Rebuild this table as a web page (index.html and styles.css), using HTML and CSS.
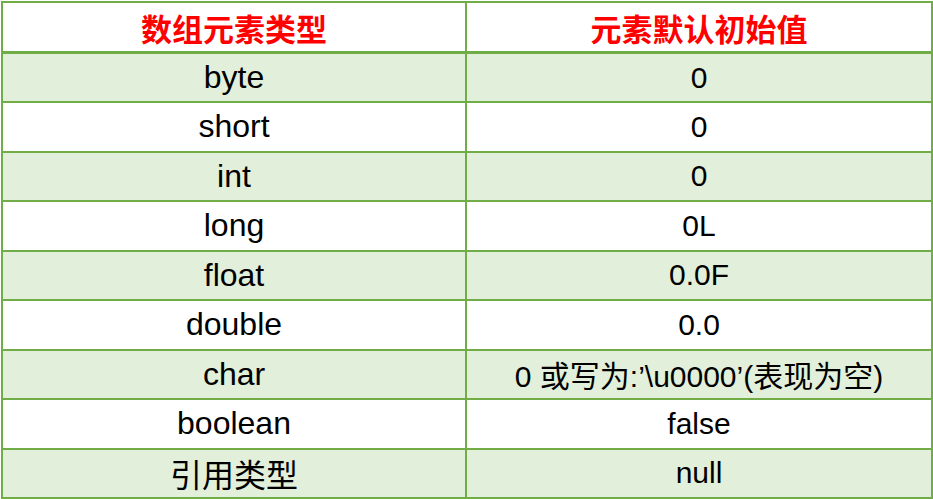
FILE: index.html
```html
<!DOCTYPE html>
<html lang="zh-CN">
<head>
<meta charset="utf-8">
<title>数组元素默认初始值</title>
<link rel="stylesheet" href="styles.css">
</head>
<body>
<table class="tbl">
  <thead>
    <tr class="head">
      <th class="c1">数组元素类型</th>
      <th class="c2">元素默认初始值</th>
    </tr>
  </thead>
  <tbody>
    <tr class="g"><td class="c1">byte</td><td class="c2">0</td></tr>
    <tr class="w"><td class="c1">short</td><td class="c2">0</td></tr>
    <tr class="g"><td class="c1">int</td><td class="c2">0</td></tr>
    <tr class="w"><td class="c1">long</td><td class="c2">0L</td></tr>
    <tr class="g"><td class="c1">float</td><td class="c2">0.0F</td></tr>
    <tr class="w"><td class="c1">double</td><td class="c2">0.0</td></tr>
    <tr class="g"><td class="c1">char</td><td class="c2">0 或写为:’\u0000’(表现为空)</td></tr>
    <tr class="w"><td class="c1">boolean</td><td class="c2">false</td></tr>
    <tr class="g"><td class="c1">引用类型</td><td class="c2">null</td></tr>
  </tbody>
</table>
</body>
</html>
```
FILE: styles.css
```css
html, body {
  margin: 0;
  padding: 0;
  background: #ffffff;
}
body {
  padding: 1px 0 0 1px;
}
.tbl {
  border-collapse: collapse;
  width: 932px;
  table-layout: fixed;
  font-family: "Liberation Sans", "Noto Sans CJK SC", sans-serif;
  color: #000000;
  border: 2px solid #71ad47;
}
.tbl th,
.tbl td {
  border: 2px solid #71ad47;
  text-align: center;
  vertical-align: middle;
  padding: 0;
  line-height: normal;
}
.c1 { width: 462px; }
.head th {
  height: 48px;
  font-family: "Noto Sans CJK SC", sans-serif;
  font-weight: 700;
  font-size: 31px;
  color: #ff0000;
  background: #ffffff;
  border-bottom: 3px solid #71ad47;
  line-height: 1;
}
tbody tr {
  height: 49.5px;
}
tbody td.c1 { font-size: 32px; }
tbody td.c2 { font-size: 30px; }
.g td { background: #e2efda; }
.w td { background: #ffffff; }
```
